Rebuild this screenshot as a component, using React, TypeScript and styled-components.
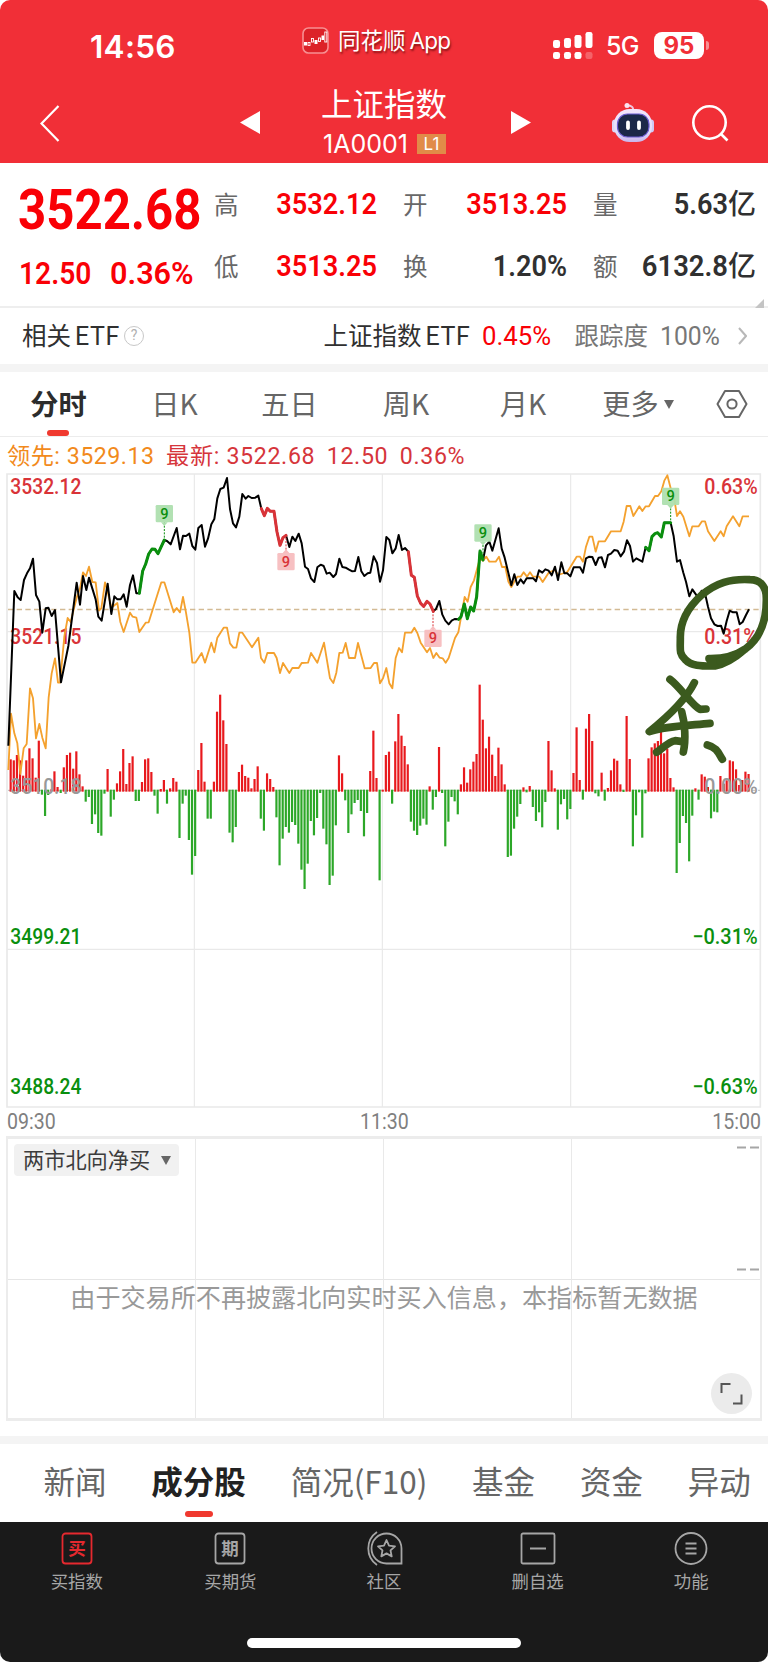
import React from "react";
import styled, { createGlobalStyle } from "styled-components";

const CJK = `"Noto Sans CJK SC", sans-serif`;
const NUM = `Roboto, "Noto Sans CJK SC", sans-serif`;

const Global = createGlobalStyle`
  * { box-sizing: border-box; }
  body { margin: 0; background: #fff; font-family: ${CJK}; }
`;

const Screen = styled.div`
  width: 768px;
  height: 1662px;
  display: flex;
  flex-direction: column;
  background: #fff;
  overflow: hidden;
  border-radius: 10px;
`;

/* condensed numeric text; the box keeps the given width */
const Num = styled.span<{
  $w: number;
  $s: number;
  $x?: number;
  $weight?: number;
  $c?: string;
  $end?: boolean;
  $ml?: number;
}>`
  display: inline-flex;
  width: ${(p) => p.$w}px;
  margin-left: ${(p) => p.$ml ?? 0}px;
  justify-content: ${(p) => (p.$end ? "flex-end" : "flex-start")};
  font: ${(p) => p.$weight ?? 600} ${(p) => p.$s}px/1 ${NUM};
  color: ${(p) => p.$c ?? "#f90006"};
  white-space: nowrap;
  transform: scaleX(${(p) => p.$x ?? 1});
  transform-origin: ${(p) => (p.$end ? "right" : "left")};
`;

/* ---------- header ---------- */
const Header = styled.header`
  height: 163px;
  flex: none;
  background: #f12f37;
  color: #fff;
`;
const StatusBar = styled.div`
  height: 84px;
  display: grid;
  grid-template-columns: 302px 251px 1fr;
  padding-top: 27px;
`;
const Clock = styled.div`
  padding: 1px 0 0 90px;
  font: 600 31.5px/38px Inter, sans-serif;
  letter-spacing: 0.3px;
`;
const AppTag = styled.div`
  display: flex;
  height: 27px;
  gap: 9px;
  align-items: center;
  font-size: 22.5px;
  line-height: 24px;
  text-shadow: 1px 2px 2px rgba(70, 0, 0, 0.6);
  white-space: nowrap;
`;
const AppName = styled.span`
  margin-top: -1px;
`;
const AppWord = styled.span`
  margin-left: 4px;
  font-family: Inter, sans-serif;
  letter-spacing: -0.8px;
`;
const Signals = styled.div`
  display: flex;
  padding-top: 5px;
  height: 32px;
  align-items: center;
`;
const Network = styled.span`
  width: 47px;
  padding-left: 13px;
  font: 500 25px/30px Inter, sans-serif;
  letter-spacing: -0.8px;
  margin-right: 14px;
`;
const Battery = styled.span`
  width: 50px;
  height: 27px;
  border-radius: 8px;
  background: #fff;
  color: #f12f37;
  font: 700 24px/28px Inter, sans-serif;
  text-align: center;
  margin-right: 2px;
`;
const Nub = styled.span`
  width: 3px;
  height: 9px;
  border-radius: 0 4px 4px 0;
  background: #f78f93;
`;
const NavBar = styled.div`
  height: 79px;
  display: grid;
  grid-template-columns: 40px 200px 81px 126px 64px 100px 81px 1fr;
  align-items: start;
  & > svg { display: block; }
`;
const TitleBlock = styled.div`
  display: flex;
  flex-direction: column;
  white-space: nowrap;
`;
const Title = styled.div`
  font-size: 31.5px;
  line-height: 36px;
`;
const Code = styled.div`
  display: flex;
  align-items: center;
  gap: 8px;
  padding: 4px 0 0 2px;
  height: 44px;
  font: 400 25px/28px Inter, sans-serif;
`;
const CodeText = styled.span`
  width: 86px;
  letter-spacing: 0;
`;
const Level = styled.span`
  width: 29px;
  height: 20px;
  background: #e18b48;
  font: 400 17px/20px Inter, sans-serif;
  text-align: center;
`;

/* ---------- quote ---------- */
const Quote = styled.section`
  height: 145px;
  flex: none;
  display: grid;
  grid-template-columns: 214px 163px 190px 189px 12px;
  border-bottom: 2px solid #eeeeee;
`;
const Last = styled.div`
  padding: 19px 0 0 18px;
`;
const Changes = styled.div`
  display: flex;
  gap: 18px;
  padding-top: 19px;
  padding-left: 1px;
`;
const Pairs = styled.div<{ $left?: number; $top?: number }>`
  padding: ${(p) => p.$top ?? 24}px 0 0 ${(p) => p.$left ?? 0}px;
`;
const Pair = styled.div`
  height: 62px;
  line-height: 34px;
  display: flex;
  justify-content: space-between;
  align-items: baseline;
  font-size: 24.5px;
  color: #686868;
  white-space: nowrap;
`;
const Amount = styled.span`
  color: #303030;
  font-size: 28px;
  font-weight: 500;
  line-height: 34px;
`;
const Corner = styled.i`
  align-self: end;
  justify-self: end;
  margin: 0 4px 3px 0;
  border-left: 9px solid transparent;
  border-bottom: 9px solid #c4c4c4;
`;

/* ---------- related ETF ---------- */
const Related = styled.section`
  height: 56px;
  flex: none;
  display: flex;
  align-items: center;
  padding: 0 21px 0 22px;
  font-size: 24.5px;
  color: #303030;
  white-space: nowrap;
`;
const Label = styled.span`
  line-height: 30px;
  margin-top: -3px;
`;
const Latin = styled.span`
  font: 400 25px/1 ${NUM};
  letter-spacing: 0.6px;
  margin-left: 4px;
`;
const Help = styled.span`
  width: 20px;
  height: 20px;
  margin-left: 4px;
  border: 1.5px solid #c8c8c8;
  border-radius: 50%;
  font: 14px/17px ${NUM};
  text-align: center;
  color: #b0b0b0;
`;
const Right = styled.span`
  margin-left: auto;
  display: flex;
  align-items: center;
`;
const Track = styled.span`
  color: #777;
  display: flex;
  align-items: center;
  margin-left: 6px;
`;
const Band = styled.div`
  height: 8px;
  flex: none;
  background: #f4f4f4;
`;

/* ---------- period tabs ---------- */
const Periods = styled.nav`
  height: 65px;
  flex: none;
  display: grid;
  grid-template-columns: 117px 115px 115px 118px 116px 114px 73px;
  border-bottom: 1.5px solid #ececec;
`;
const Period = styled.div<{ $on?: boolean }>`
  display: flex;
  align-items: center;
  justify-content: center;
  position: relative;
  padding-bottom: 3px;
  font-size: 28.2px;
  color: ${(p) => (p.$on ? "#2c2c2c" : "#666")};
  font-weight: ${(p) => (p.$on ? 700 : 400)};
  &::after {
    content: "";
    display: ${(p) => (p.$on ? "block" : "none")};
    position: absolute;
    bottom: 0;
    left: 47px;
    width: 22px;
    height: 6px;
    border-radius: 3px;
    background: #f0392f;
  }
`;
const SettingsIcon = styled.svg`
  margin-top: 3px;
`;
const Caret = styled.i<{ $ml: number; $mt?: number }>`
  margin-left: ${(p) => p.$ml}px;
  margin-top: ${(p) => p.$mt ?? 0}px;
  border: 5.5px solid transparent;
  border-bottom: 0;
  border-top: 9px solid #666;
`;
const Legend = styled.div`
  height: 33px;
  flex: none;
  display: flex;
  align-items: center;
  gap: 11.5px;
  padding: 5px 0 0 7px;
  font: 400 23.2px/28px ${NUM};
  letter-spacing: 0.65px;
  color: #d6353b;
  white-space: nowrap;
`;
const Lead = styled.span`
  color: #f28a1c;
  letter-spacing: 0.5px;
`;
const Chart = styled.svg`
  display: block;
  flex: none;
`;
const Times = styled.div`
  height: 26px;
  flex: none;
  display: flex;
  justify-content: space-between;
  align-items: center;
  padding: 0 7px 2px;
`;

/* ---------- northbound panel ---------- */
const Panel = styled.section`
  height: 285px;
  flex: none;
  margin: 0 6px 15px;
  border: 2px solid #ececec;
  border-width: 3px 2px;
  display: grid;
  grid-template-columns: repeat(4, 1fr);
  grid-template-rows: 141px 1fr;
`;
const Cell = styled.div<{ $col: number; $row: number }>`
  grid-column: ${(p) => p.$col};
  grid-row: ${(p) => p.$row};
  border-right: ${(p) => (p.$col < 4 ? "1px solid #e9e9e9" : "0")};
  border-bottom: ${(p) => (p.$row === 1 ? "1px solid #e6e6e6" : "0")};
`;
const Chip = styled.div`
  grid-column: 1;
  grid-row: 1;
  width: 165px;
  height: 32px;
  margin: 5px 0 0 6px;
  padding: 0 9px 3px;
  display: flex;
  align-items: center;
  border-radius: 4px;
  background: #f1f1f1;
  font-size: 21.2px;
  line-height: 28px;
  color: #3c3c3c;
  white-space: nowrap;
`;
const Dashes = styled.svg`
  grid-column: 4;
  grid-row: 1;
  justify-self: end;
`;
const Notice = styled.div`
  grid-column: 1 / 5;
  grid-row: 2;
  margin-top: -3px;
  text-align: center;
  font-size: 25.1px;
  line-height: 38px;
  color: #999;
  white-space: nowrap;
`;
const Expand = styled.div`
  grid-column: 4;
  grid-row: 2;
  justify-self: end;
  align-self: end;
  width: 41px;
  height: 41px;
  margin: 0 8px 4px 0;
  border-radius: 50%;
  background: #ebebeb;
`;

/* ---------- info tabs ---------- */
const Info = styled.nav`
  height: 78px;
  flex: none;
  display: flex;
  gap: 44.8px;
  padding-left: 43.5px;
  white-space: nowrap;
`;
const InfoTab = styled.div<{ $on?: boolean }>`
  display: flex;
  flex-direction: column;
  align-items: center;
  font-size: 31.5px;
  line-height: 66px;
  padding-top: 3px;
  color: ${(p) => (p.$on ? "#222" : "#666")};
  font-weight: ${(p) => (p.$on ? 700 : 400)};
  &::after {
    content: "";
    width: 28px;
    height: 6px;
    margin-top: -2px;
    border-radius: 3px;
    background: ${(p) => (p.$on ? "#f0392f" : "transparent")};
  }
`;

/* ---------- bottom bar ---------- */
const Footer = styled.footer`
  flex: 1;
  background: #1a1a1a;
  display: flex;
  flex-direction: column;
  justify-content: space-between;
  align-items: center;
`;
const Actions = styled.div`
  width: 768px;
  display: grid;
  grid-template-columns: repeat(5, 1fr);
`;
const Action = styled.div`
  display: flex;
  flex-direction: column;
  align-items: center;
  padding-top: 8px;
  font-size: 17.4px;
  line-height: 29px;
  color: #a6a6a6;
  & > svg { display: block; }
`;
const HomeBar = styled.div`
  width: 274px;
  height: 10px;
  margin-bottom: 14px;
  border-radius: 5px;
  background: #fff;
`;

/* ---------- chart data (plot units, three per pixel) ---------- */
const ZERO = 991;
const flows = [
  93, 90, 106, 90, 44, 90, 126, 96, 38, 149, -13, -77, -14, 3, 57, 10, -8, 69, 106, 113, 65, 117, 48, 12, -34, -20,
  -101, -72, -128, -136, -10, 64, -79, -28, 21, 57, 124, 19, 82, 102, -32, -32, 25, 93, 96, 55, -16, -70, 4, 31, -40,
  6, 37, 26, -143, -40, -16, -149, -253, -197, 61, 142, 26, -85, -85, 26, 236, 287, 210, 139, -127, -156, -110, 55,
  77, 43, 38, 6, 34, 72, -85, -121, 51, 34, 10, -81, -225, -145, -110, -127, -95, -104, -160, -238, -296, -220, -92,
  -135, -83, -8, -115, -162, -284, -256, -105, 105, 51, -30, -128, -72, -38, -29, -62, -138, -68, 58, 179, 37, -270,
  2, 106, 116, -40, 147, 229, 164, 133, 78, -94, -121, -134, -106, -85, -103, 12, -58, -20, 130, -8, -168, -94, -20,
  -33, -72, 18, 69, 23, 63, 86, 109, 317, 212, 126, 161, 107, 43, 128, 78, 18, -200, -196, -115, -79, -41, 9, -6, 13,
  -50, -92, -66, -111, -35, 148, 60, 6, -118, -42, -26, -87, -56, 52, 189, 31, -28, 185, 229, 148, -9, -18, 53, -31,
  7, 60, 95, 89, 18, -5, 223, 94, -168, -75, -6, -142, -9, 96, 129, 141, 148, 176, 111, 125, 37, 9, -248, -158, -77,
  -98, -213, -76, 6, -28, 48, 41, 10, -84, -64, -66, 43, 20, 30, 90, 87, 63, 16, 31, 56, 49,
];

type Run = [number, string];
const join = (runs: Run[]) =>
  runs
    .map(([dx, pts]) =>
      pts
        .split(" ")
        .map((p) => {
          const [x, y] = p.split(",").map(Number);
          return `${x + dx},${y}`;
        })
        .join(" "),
    )
    .join(" ");

const price = join([
  [0, "25,857 43,393 53,412 62,420 72,360 81,340 90,325 99,296 108,405 118,425 127,518 137,445 145,443 155,468 165,450 183,667 205,558 230,368 240,434 249,348 259,390 267,353 287,418 295,470 305,482 323,371 334,462 343,409 352,418 362,418 371,403 380,440 390,375 399,346 409,400 418,400 428,333 437,312 446,282 456,267 465,268 474,281 493,240 501,243 512,253 530,204 540,268 549,227 558,228 568,221 577,258 586,269 595,204 605,195 615,260 624,236 634,193 643,177 652,115 661,87 671,83 681,54 690,147 699,190 708,202 718,170 727,102 737,116 745,108 755,114 766,113"],
  [570, "205,107 214,146 223,167 232,145 241,154 252,154 261,216 270,256 279,233 288,226 298,261 307,230 316,243 326,221 335,250 345,320 354,327 363,355 373,366 382,322 392,314 401,318 410,341 419,338 430,351 438,342 448,296 457,321 467,323 477,329 487,334 495,333 505,291 514,334 523,348 533,340 541,338 551,289 561,309 570,365 579,331 589,231 598,240 607,280 617,265 626,225 636,270 645,264 655,275 664,346 673,352 682,408 692,430 701,439 711,424 720,432 730,454 738,447 748,423 757,464 766,482"],
  [1140, "206,493 215,482 224,477 236,478 243,470 253,432 262,476 272,441 281,453 290,410 300,273 309,300 318,256 328,245 337,272 356,205 365,266 374,293 394,376 403,343 412,375 422,358 431,370 440,355 460,355 468,364 477,331 487,338 496,328 506,332 515,346 525,320 534,360 544,307 553,340 562,340 571,349 581,322 600,322 609,338 618,295 628,290 637,291 647,315 656,293 665,292 675,322 684,285 693,281 703,270 713,272 722,289 732,275 741,241 750,258"],
  [1680, "219,305 229,295 247,305 257,262 267,272 276,230 285,221 293,218 304,231 313,188 332,188 341,229 351,305 360,300 370,338 378,365 388,409 397,388 416,415 425,392 435,400 444,440 453,475 463,493 473,498 483,497 491,521 500,483 509,452 519,457 530,457 539,493 548,486 558,465 567,448"],
]);

const lead = join([
  [0, "25,930 33,761 43,820 52,850 61,942 71,865 80,852 90,685 99,715 108,835 118,792 127,833 137,865 146,712 155,640 165,595 174,668 180,668 193,530 203,474 212,486 222,445 231,410 240,385 249,337 258,348 267,320 277,366 287,367 297,452 304,445 315,367 324,400 334,443 352,429 361,486 371,516 390,458 398,470 409,473 418,516 437,488 446,487 484,367 493,367 521,457 530,444 540,457 549,411 558,458 568,518 577,608 586,608 605,579 615,608 634,548 643,577 652,533 671,503 681,503 690,550 700,563 709,563 718,518 727,518 756,562"],
  [570, "205,533 213,594 223,608 232,579 252,579 260,594 270,639 279,609 298,639 307,624 326,624 335,609 354,608 363,579 382,608 402,548 420,655 430,669 439,638 448,579 458,578 467,549 477,594 495,594 504,549 524,625 542,624 552,609 561,609 570,670 579,655 589,624 598,670 607,685 617,594 627,564 636,577 645,518 664,518 673,503 682,519 692,548 711,577 720,564 730,594 739,579 749,593 758,595"],
  [1140, "197,608 206,594 225,534 235,517 254,411 263,425 272,381 282,361 300,295 309,302 319,290 328,305 347,305 357,290 366,321 376,321 385,365 394,381 403,365 412,350 422,350 431,337 441,350 450,337 459,350 478,350 488,366 506,338 525,330 534,345 562,336 590,290 600,290 609,305 618,260 628,230 637,230 647,275 656,244 675,244 693,214 722,214 731,185"],
  [1680, "200,138 211,138 220,168 238,139 247,153 257,139 267,139 285,108 294,108 304,94 313,62 322,46 332,85 341,105 351,168 360,154 370,170 388,229 397,199 416,199 426,184 435,184 444,214 463,243 482,214 491,229 500,199 519,169 538,199 548,169 567,169"],
]);

const UP = "#d93338";
const DOWN = "#0a8f0e";

const signals = [
  { c: DOWN, pts: join([[0, "418,400 428,333 437,312 446,282 456,267 465,268 474,281 493,240"]]) },
  { c: UP, pts: join([[570, "214,146 223,167 232,145 241,154 252,154 261,216 270,256 279,233 288,226"]]) },
  { c: UP, pts: join([[570, "655,275 664,346 673,352 682,408 692,430 701,439 711,424 720,432 730,454"]]) },
  { c: DOWN, pts: join([[1140, "236,478 243,470 253,432 262,476 272,441 281,453 290,410 300,273 309,300"]]) },
  { c: DOWN, pts: join([[1680, "257,262 267,272 276,230 285,221 293,218 304,231 313,188 332,188"]]) },
];

const marks = [
  { x: 493, y: 135, to: 240, up: false },
  { x: 858, y: 279, to: 226, up: true },
  { x: 1299, y: 509, to: 454, up: true },
  { x: 1449, y: 193, to: 290, up: false },
  { x: 2012, y: 83, to: 188, up: false },
];

const levels = [
  { y: 102, l: "3532.12", r: "0.63%", c: UP, rw: 160 },
  { y: 552, l: "3521.15", r: "0.31%", c: UP, rw: 160 },
  { y: 1002, l: "3510.18", r: "0.00%", c: "#999", rw: 160 },
  { y: 1453, l: "3499.21", r: "−0.31%", c: DOWN, rw: 196 },
  { y: 1903, l: "3488.24", r: "−0.63%", c: DOWN, rw: 196 },
];

function MinuteChart() {
  return (
    <Chart width="768" height="640" viewBox="0 30 2304 1920">
      <g fill="none" stroke="#e9e9e9" strokeWidth="3.500">
        {[583, 1147, 1712].map((x) => (
          <path key={x} d={`M${x} 42V1941`} />
        ))}
        <path d="M21 515H2281M21 1468H2281" />
        <path strokeWidth="5" d="M21 42H2281V1941H21Z" />
      </g>
      <path d="M24 448.500H2280" stroke="#d3ba94" strokeWidth="3.800" strokeDasharray="16 10" />
      <path d="M24 991H2280" stroke="#bbb" strokeWidth="3" strokeDasharray="10 8" />
      {flows.map((v, i) => {
        const x = 32 + i * 9.38;
        return (
          <path
            key={i}
            d={`M${x} ${v > 0 ? ZERO + 4 : ZERO - 2}V${ZERO - v}`}
            stroke={v > 0 ? "#e8191d" : "#2ca728"}
            strokeWidth="6.600"
          />
        );
      })}
      <g fontFamily="Roboto, sans-serif" fontSize="64" fontWeight="500">
        {levels.map((v) => (
          <g key={v.l} fill={v.c}>
            <text x="31" y={v.y} textLength="213" lengthAdjust="spacingAndGlyphs">{v.l}</text>
            <text x={2273 - v.rw} y={v.y} textLength={v.rw} lengthAdjust="spacingAndGlyphs">{v.r}</text>
          </g>
        ))}
      </g>
      <g fill="none" strokeLinejoin="round">
        <polyline points={lead} stroke="#f4a12e" strokeWidth="5.500" />
        <polyline points={price} stroke="#000" strokeWidth="6" />
        {signals.map((s) => (
          <polyline key={s.pts} points={s.pts} stroke={s.c} strokeWidth="9" strokeLinecap="round" />
        ))}
      </g>
      {marks.map((m) => (
        <g key={m.x}>
          <path
            d={`M${m.x} ${m.up ? m.y : m.y + 52}V${m.to}`}
            stroke={m.up ? UP : DOWN}
            strokeWidth="3"
            strokeDasharray="6 4"
          />
          <rect x={m.x - 26} y={m.y} width="52" height="52" rx="4" fill={m.up ? "#f7bcbe" : "#addfae"} opacity="0.94" />
          <path
            d={m.up ? `M${m.x - 10} ${m.y}l10 -11l10 11Z` : `M${m.x - 10} ${m.y + 52}l10 11l10 -11Z`}
            fill={m.up ? "#f7bcbe" : "#addfae"}
          />
          <text
            x={m.x}
            y={m.y + 41}
            textAnchor="middle"
            fontFamily="Roboto, sans-serif"
            fontWeight="500"
            fontSize="44"
            fill={m.up ? UP : DOWN}
          >
            9
          </text>
        </g>
      ))}
      <g transform="translate(1680 0)" fill="none" stroke="#3b5a1e" strokeWidth="23" strokeLinecap="round" strokeLinejoin="round">
        <path d="M447 596C500 597 530 585 556 567C600 535 620 480 619 415C619 380 602 359 570 359C510 356 470 368 425 405C375 450 360 495 361 535C361 570 357 580 375 598C395 620 430 618 465 618C500 612 530 590 556 567" />
        <path d="M480 604L540 578" />
        <path d="M330 658C360 680 395 735 420 748L438 747" />
        <path d="M403 668C380 715 330 765 268 815C320 797 390 796 450 790" />
        <path d="M365 755C375 790 378 840 370 876" />
        <path d="M290 877C310 864 325 845 345 842L362 844" />
        <path d="M442 855C470 862 475 878 487 898" />
      </g>
    </Chart>
  );
}

function AppIcon() {
  return (
    <svg width="27" height="27" viewBox="0 0 27 27">
      <rect x="1" y="1" width="25" height="25" rx="5.500" fill="#dc2228" stroke="#f79092" strokeWidth="1.600" />
      <g fill="#fff">
        <rect x="2" y="15" width="3" height="3.500" />
        <rect x="12.500" y="13" width="3" height="4" />
        <rect x="19.500" y="8.500" width="2.500" height="4.500" />
      </g>
      <g fill="none" stroke="#fff" strokeWidth="0.900">
        <rect x="6" y="15.500" width="2" height="3" />
        <rect x="9.500" y="11.500" width="2" height="3.500" />
        <rect x="16.500" y="11" width="2" height="3.500" />
        <rect x="22.800" y="5" width="2" height="10" />
      </g>
    </svg>
  );
}

function Cellular() {
  return (
    <svg width="40" height="27" viewBox="0 0 40 27" fill="#fff">
      {[0, 11, 21.5, 32.5].map((x, i) => (
        <React.Fragment key={x}>
          <rect x={x} y={[8, 6, 3, 0][i]} width="7" height={[8, 10, 13, 16][i]} rx="2.200" />
          <rect x={x} y="20" width="7" height="7" rx="2.200" opacity={i === 3 ? 0.25 : 1} />
        </React.Fragment>
      ))}
    </svg>
  );
}

function Robot() {
  return (
    <svg width="44" height="42" viewBox="0 0 44 42">
      <defs>
        <linearGradient id="shell" x1="0" y1="0" x2="0" y2="1">
          <stop offset="0" stopColor="#f4e4fb" />
          <stop offset="0.700" stopColor="#e2defa" />
          <stop offset="1" stopColor="#c9b4ec" />
        </linearGradient>
      </defs>
      <path d="M22 9C23 5 20 3.500 16.500 3.500" fill="none" stroke="#f0c4dc" strokeWidth="1.800" />
      <circle cx="16" cy="3.500" r="2.500" fill="#fbe3f0" />
      <rect x="1" y="17.500" width="6" height="13" rx="3" fill="#dcd6f6" />
      <rect x="37" y="17.500" width="6" height="13" rx="3" fill="#cfc9f4" />
      <rect x="3" y="7" width="38" height="33" rx="15.500" fill="url(#shell)" />
      <rect x="6.500" y="12" width="31.500" height="23" rx="10" fill="#1c2848" stroke="#6b5bd0" strokeWidth="1.200" />
      <path d="M17 20.500v5.500M28 20.500v5.500" stroke="#fff" strokeWidth="3.800" strokeLinecap="round" />
    </svg>
  );
}

function BottomIcon({ kind }: { kind: number }) {
  const g = "#a6a6a6";
  return (
    <svg width="40" height="36" viewBox="0 0 40 36" fill="none" stroke={kind === 0 ? "#e5292f" : g} strokeWidth="1.800">
      {kind < 2 && (
        <>
          <rect x="5.500" y="3.500" width="29" height="30" rx="3" />
          <text
            x="20"
            y="25"
            textAnchor="middle"
            fontSize="17.500"
            fontWeight="700"
            fontFamily='"Noto Sans CJK SC", sans-serif'
            stroke="none"
            fill={kind === 0 ? "#e5292f" : g}
          >
            {kind === 0 ? "买" : "期"}
          </text>
        </>
      )}
      {kind === 2 && (
        <>
          <path d="M37.500 33.500H22.500A15 15 0 1 1 37.500 18.500Z" />
          <path d="M13 2A20 20 0 0 0 13 35" />
          <path d="M22.500 10l2.500 5.600l6 .7l-4.500 4.100l1.200 6l-5.200-3l-5.200 3l1.200-6l-4.500-4.100l6-.7Z" strokeLinejoin="round" />
        </>
      )}
      {kind === 3 && (
        <>
          <rect x="3.500" y="3.500" width="33" height="30" rx="1.500" />
          <path d="M12 18.500H28" />
        </>
      )}
      {kind === 4 && (
        <>
          <circle cx="20" cy="18.500" r="15.500" />
          <path d="M14.500 13.500H25.500M14.500 18.500H25.500M14.500 23.500H25.500" />
        </>
      )}
    </svg>
  );
}

const Arrow = ({ flip }: { flip?: boolean }) => (
  <svg width="20" height="50" viewBox="0 0 20 50">
    <path d={flip ? "M0 27L20 38.500L0 50Z" : "M20 27L0 38.500L20 50Z"} fill="#fff" />
  </svg>
);

export default function App() {
  return (
    <Screen>
      <Global />
      <Header>
        <StatusBar>
          <Clock>14:56</Clock>
          <AppTag>
            <AppIcon />
            <AppName>
              同花顺<AppWord>App</AppWord>
            </AppName>
          </AppTag>
          <Signals>
            <Cellular />
            <Network>5G</Network>
            <Battery>95</Battery>
            <Nub />
          </Signals>
        </StatusBar>
        <NavBar>
          <span />
          <svg width="20" height="58" viewBox="0 0 20 58">
            <path d="M18.500 22L1.500 39.500L18.500 57" fill="none" stroke="#fff" strokeWidth="2.200" />
          </svg>
          <Arrow />
          <TitleBlock>
            <Title>上证指数</Title>
            <Code>
              <CodeText>1A0001</CodeText>
              <Level>L1</Level>
            </Code>
          </TitleBlock>
          <span />
          <Arrow flip />
          <svg width="44" height="60" viewBox="0 -18 44 60">
            <Robot />
          </svg>
          <svg width="38" height="60" viewBox="0 0 38 60" fill="none" stroke="#fff" strokeWidth="2.600">
            <circle cx="17.500" cy="38.500" r="16.200" />
            <path d="M29 50L35.500 56.500" />
          </svg>
        </NavBar>
      </Header>

      <Quote>
        <Last>
          <Num $w={190} $s={56} $x={0.878} $weight={700}>3522.68</Num>
          <Changes>
            <Num $w={73} $s={32} $x={0.88}>12.50</Num>
            <Num $w={82} $s={32} $x={0.955}>0.36%</Num>
          </Changes>
        </Last>
        <Pairs>
          <Pair>高<Num $w={100} $s={29.5} $x={0.92} $end>3532.12</Num></Pair>
          <Pair>低<Num $w={100} $s={29.5} $x={0.92} $end>3513.25</Num></Pair>
        </Pairs>
        <Pairs $left={26}>
          <Pair>开<Num $w={100} $s={29.5} $x={0.92} $end>3513.25</Num></Pair>
          <Pair>换<Num $w={100} $s={29.5} $x={0.92} $end $c="#303030">1.20%</Num></Pair>
        </Pairs>
        <Pairs $left={26} $top={22}>
          <Pair>量<Amount><Num $w={54} $s={29.5} $x={0.92} $end $c="#303030">5.63</Num>亿</Amount></Pair>
          <Pair>额<Amount><Num $w={86} $s={29.5} $x={0.93} $end $c="#303030">6132.8</Num>亿</Amount></Pair>
        </Pairs>
        <Corner />
      </Quote>

      <Related>
        <Label>相关</Label>
        <Latin>ETF</Latin>
        <Help>?</Help>
        <Right>
          <Label>上证指数</Label>
          <Latin>ETF</Latin>
          <Num $w={87} $s={26} $x={0.99} $weight={400} $ml={11}>0.45%</Num>
          <Track>
            <Label>跟踪度</Label>
            <Num $w={78} $s={26} $x={0.95} $weight={400} $c="#777" $ml={12}>100%</Num>
            <svg width="9" height="18" viewBox="0 0 9 18">
              <path d="M1 1L8 9L1 17" fill="none" stroke="#b8b8b8" strokeWidth="2" />
            </svg>
          </Track>
        </Right>
      </Related>
      <Band />

      <Periods>
        <Period $on>分时</Period>
        <Period>日K</Period>
        <Period>五日</Period>
        <Period>周K</Period>
        <Period>月K</Period>
        <Period>更多<Caret $ml={5} $mt={3} /></Period>
        <Period>
          <SettingsIcon width="32" height="30" viewBox="0 0 32 30" fill="none" stroke="#666" strokeWidth="2">
            <path d="M9 2H23L30.500 15L23 28H9L1.500 15Z" strokeLinejoin="round" />
            <circle cx="16" cy="15" r="4.600" />
          </SettingsIcon>
        </Period>
      </Periods>

      <Legend>
        <Lead>领先: 3529.13</Lead>
        <span>最新: 3522.68</span>
        <span>12.50</span>
        <span>0.36%</span>
      </Legend>
      <MinuteChart />
      <Times>
        <Num $w={48} $s={21.5} $x={0.91} $weight={400} $c="#808080">09:30</Num>
        <Num $w={48} $s={21.5} $x={0.91} $weight={400} $c="#808080">11:30</Num>
        <Num $w={48} $s={21.5} $x={0.91} $weight={400} $c="#808080" $end>15:00</Num>
      </Times>

      <Panel>
        {[1, 2].map((row) => [1, 2, 3, 4].map((col) => <Cell key={`${row}${col}`} $col={col} $row={row} />))}
        <Chip>
          两市北向净买
          <Caret $ml={11} $mt={3} />
        </Chip>
        <Dashes width="24" height="140" viewBox="0 0 24 140">
          <path d="M1 8.500H10M14 8.500H23M1 130.500H10M14 130.500H23" stroke="#a6a6a6" strokeWidth="2" />
        </Dashes>
        <Notice>由于交易所不再披露北向实时买入信息，本指标暂无数据</Notice>
        <Expand>
          <svg width="41" height="41" viewBox="0 0 41 41" fill="none" stroke="#555" strokeWidth="2">
            <path d="M10.500 20V11H19.500M22 30.500H30.500V21.500" />
          </svg>
        </Expand>
      </Panel>
      <Band />

      <Info>
        <InfoTab>新闻</InfoTab>
        <InfoTab $on>成分股</InfoTab>
        <InfoTab>简况(F10)</InfoTab>
        <InfoTab>基金</InfoTab>
        <InfoTab>资金</InfoTab>
        <InfoTab>异动</InfoTab>
      </Info>

      <Footer>
        <Actions>
          {["买指数", "买期货", "社区", "删自选", "功能"].map((label, i) => (
            <Action key={label}>
              <BottomIcon kind={i} />
              {label}
            </Action>
          ))}
        </Actions>
        <HomeBar />
      </Footer>
    </Screen>
  );
}
